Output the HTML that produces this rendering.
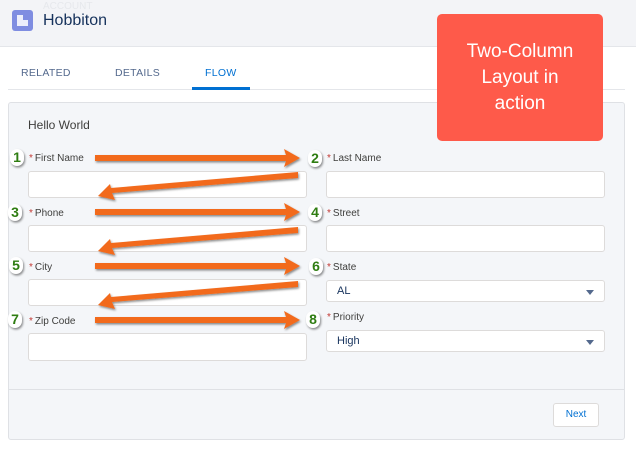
<!DOCTYPE html>
<html><head><style>
body{margin:0;width:636px;height:454px;overflow:hidden;background:#fff;font-family:"Liberation Sans",sans-serif;position:relative}
.a{position:absolute}
.lbl{position:absolute;font-size:10px;color:#3e3e3c}
.lbl b{color:#c23934;font-weight:normal;margin-right:2px}
.in{position:absolute;background:#fff;border:1px solid #dddbda;border-radius:3px;box-sizing:border-box}
.sel{font-size:11px;color:#16325c;padding-left:10px;line-height:20px}
.sel:after{content:"";position:absolute;right:10px;top:9px;border:4px solid transparent;border-top:5px solid #54698d}
.bd{position:absolute;width:14px;height:17px;background:#fff;border-radius:7px;box-shadow:1px 1.5px 2px rgba(0,0,0,.45);color:#2f7d12;font-weight:bold;font-size:14px;text-align:center;line-height:17px}
</style></head><body>
<div class="a" style="left:0;top:0;width:636px;height:46px;background:#f3f4f7;border-bottom:1px solid #e4e6ea"></div>
<div class="a" style="left:43px;top:1px;font-size:10px;color:#e6e8ec">ACCOUNT</div>
<div class="a" style="left:12px;top:10px;width:21px;height:21px;background:#7f8de1;border-radius:3px"><div class="a" style="left:5px;top:5px;width:6px;height:11px;background:#fff;opacity:.85"></div><div class="a" style="left:11px;top:10px;width:5px;height:6px;background:#fff;opacity:.85"></div></div>
<div class="a" style="left:43px;top:12px;font-size:16px;color:#16325c">Hobbiton</div>
<div class="a" style="left:21px;top:67px;font-size:10.5px;color:#54698d;letter-spacing:.3px">RELATED</div>
<div class="a" style="left:115px;top:67px;font-size:10.5px;color:#54698d;letter-spacing:.3px">DETAILS</div>
<div class="a" style="left:205px;top:67px;font-size:10.5px;color:#0070d2;letter-spacing:.3px">FLOW</div>
<div class="a" style="left:8px;top:89px;width:617px;height:1px;background:#e4e6ea"></div>
<div class="a" style="left:192px;top:87px;width:58px;height:3px;background:#0070d2"></div>
<div class="a" style="left:8px;top:102px;width:617px;height:338px;background:#f4f6f9;border:1px solid #dfe1e5;border-radius:3px;box-sizing:border-box"></div>
<div class="a" style="left:9px;top:389px;width:615px;height:1px;background:#dfe1e5"></div>
<div class="a" style="left:28px;top:118px;font-size:12px;color:#3e3e3c">Hello World</div>

<div class="lbl" style="left:29px;top:153px"><b>*</b>First Name</div>
<div class="lbl" style="left:327px;top:153px"><b>*</b>Last Name</div>
<div class="lbl" style="left:29px;top:208px"><b>*</b>Phone</div>
<div class="lbl" style="left:327px;top:208px"><b>*</b>Street</div>
<div class="lbl" style="left:29px;top:262px"><b>*</b>City</div>
<div class="lbl" style="left:327px;top:262px"><b>*</b>State</div>
<div class="lbl" style="left:29px;top:316px"><b>*</b>Zip Code</div>
<div class="lbl" style="left:327px;top:312px"><b>*</b>Priority</div>

<div class="in" style="left:28px;top:171px;width:279px;height:27px"></div>
<div class="in" style="left:326px;top:171px;width:279px;height:27px"></div>
<div class="in" style="left:28px;top:225px;width:279px;height:27px"></div>
<div class="in" style="left:326px;top:225px;width:279px;height:27px"></div>
<div class="in" style="left:28px;top:279px;width:279px;height:27px"></div>
<div class="in sel" style="left:326px;top:280px;width:279px;height:22px">AL</div>
<div class="in" style="left:28px;top:333px;width:279px;height:28px"></div>
<div class="in sel" style="left:326px;top:330px;width:279px;height:22px">High</div>
<div class="in" style="left:553px;top:403px;width:46px;height:24px;font-size:10px;color:#0070d2;text-align:center;line-height:22px">Next</div>

<svg class="a" style="left:0;top:0" width="636" height="454">
<defs><filter id="s"><feDropShadow dx="1" dy="1.5" stdDeviation="1" flood-color="#000" flood-opacity=".45"/></filter></defs>
<g fill="#f26a1b" filter="url(#s)">
<path d="M95 155 L286 155 L284 149 L300 158 L284 167 L286 161 L95 161 Z"/>
<path d="M95 209 L286 209 L284 203 L300 212 L284 221 L286 215 L95 215 Z"/>
<path d="M95 263 L286 263 L284 257 L300 266 L284 275 L286 269 L95 269 Z"/>
<path d="M95 317 L286 317 L284 311 L300 320 L284 329 L286 323 L95 323 Z"/>
<path d="M298 172 L298 178 L112 193 L115 200 L98 196 L110 184 L111 188 Z"/>
<path d="M298 227 L298 233 L112 248 L115 255 L98 251 L110 239 L111 243 Z"/>
<path d="M298 281 L298 287 L112 302 L115 309 L98 305 L110 293 L111 297 Z"/>
</g>
</svg>
<div class="bd" style="left:10px;top:149px">1</div><div class="bd" style="left:308px;top:150px">2</div>
<div class="bd" style="left:8px;top:204px">3</div><div class="bd" style="left:308px;top:204px">4</div>
<div class="bd" style="left:9px;top:257px">5</div><div class="bd" style="left:309px;top:258px">6</div>
<div class="bd" style="left:8px;top:311px">7</div><div class="bd" style="left:306px;top:311px">8</div>
<div class="a" style="left:437px;top:14px;width:166px;height:127px;background:#fe5a4a;border-radius:5px;color:#fff;font-size:19px;text-align:center;line-height:26px;padding-top:25px;box-sizing:border-box">Two-Column<br>Layout in<br>action</div>
</body></html>
